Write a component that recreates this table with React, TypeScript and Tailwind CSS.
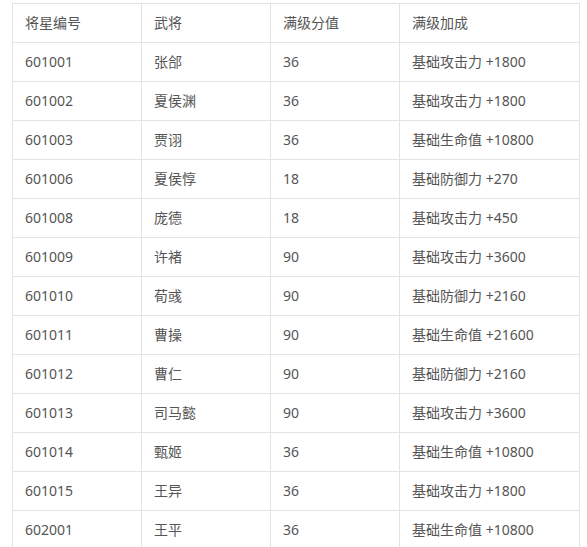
const rows: [string, string, string, string][] = [
  ["601001", "张郃", "36", "基础攻击力 +1800"],
  ["601002", "夏侯渊", "36", "基础攻击力 +1800"],
  ["601003", "贾诩", "36", "基础生命值 +10800"],
  ["601006", "夏侯惇", "18", "基础防御力 +270"],
  ["601008", "庞德", "18", "基础攻击力 +450"],
  ["601009", "许褚", "90", "基础攻击力 +3600"],
  ["601010", "荀彧", "90", "基础防御力 +2160"],
  ["601011", "曹操", "90", "基础生命值 +21600"],
  ["601012", "曹仁", "90", "基础防御力 +2160"],
  ["601013", "司马懿", "90", "基础攻击力 +3600"],
  ["601014", "甄姬", "36", "基础生命值 +10800"],
  ["601015", "王异", "36", "基础攻击力 +1800"],
  ["602001", "王平", "36", "基础生命值 +10800"],
];

const headers = ["将星编号", "武将", "满级分值", "满级加成"];

export default function App() {
  return (
    <div
      className="bg-white w-[587px] h-[547px] overflow-hidden pt-[3px] pl-[12px]"
      style={{ fontFamily: '"Noto Sans", "Noto Sans CJK SC", sans-serif' }}
    >
      <table className="border-collapse w-[568px] table-fixed text-[14px] text-[#555]">
        <colgroup>
          <col className="w-[129px]" />
          <col className="w-[129px]" />
          <col className="w-[129px]" />
          <col />
        </colgroup>
        <thead>
          <tr className="h-[39px]">
            {headers.map((h) => (
              <th
                key={h}
                className="border border-[#e3e3e3] px-[12px] text-left font-normal leading-none"
              >
                {h}
              </th>
            ))}
          </tr>
        </thead>
        <tbody>
          {rows.map((r) => (
            <tr key={r[0]} className="h-[39px]">
              {r.map((c, i) => (
                <td key={i} className="border border-[#e3e3e3] px-[12px] leading-none">
                  {c}
                </td>
              ))}
            </tr>
          ))}
        </tbody>
      </table>
    </div>
  );
}
